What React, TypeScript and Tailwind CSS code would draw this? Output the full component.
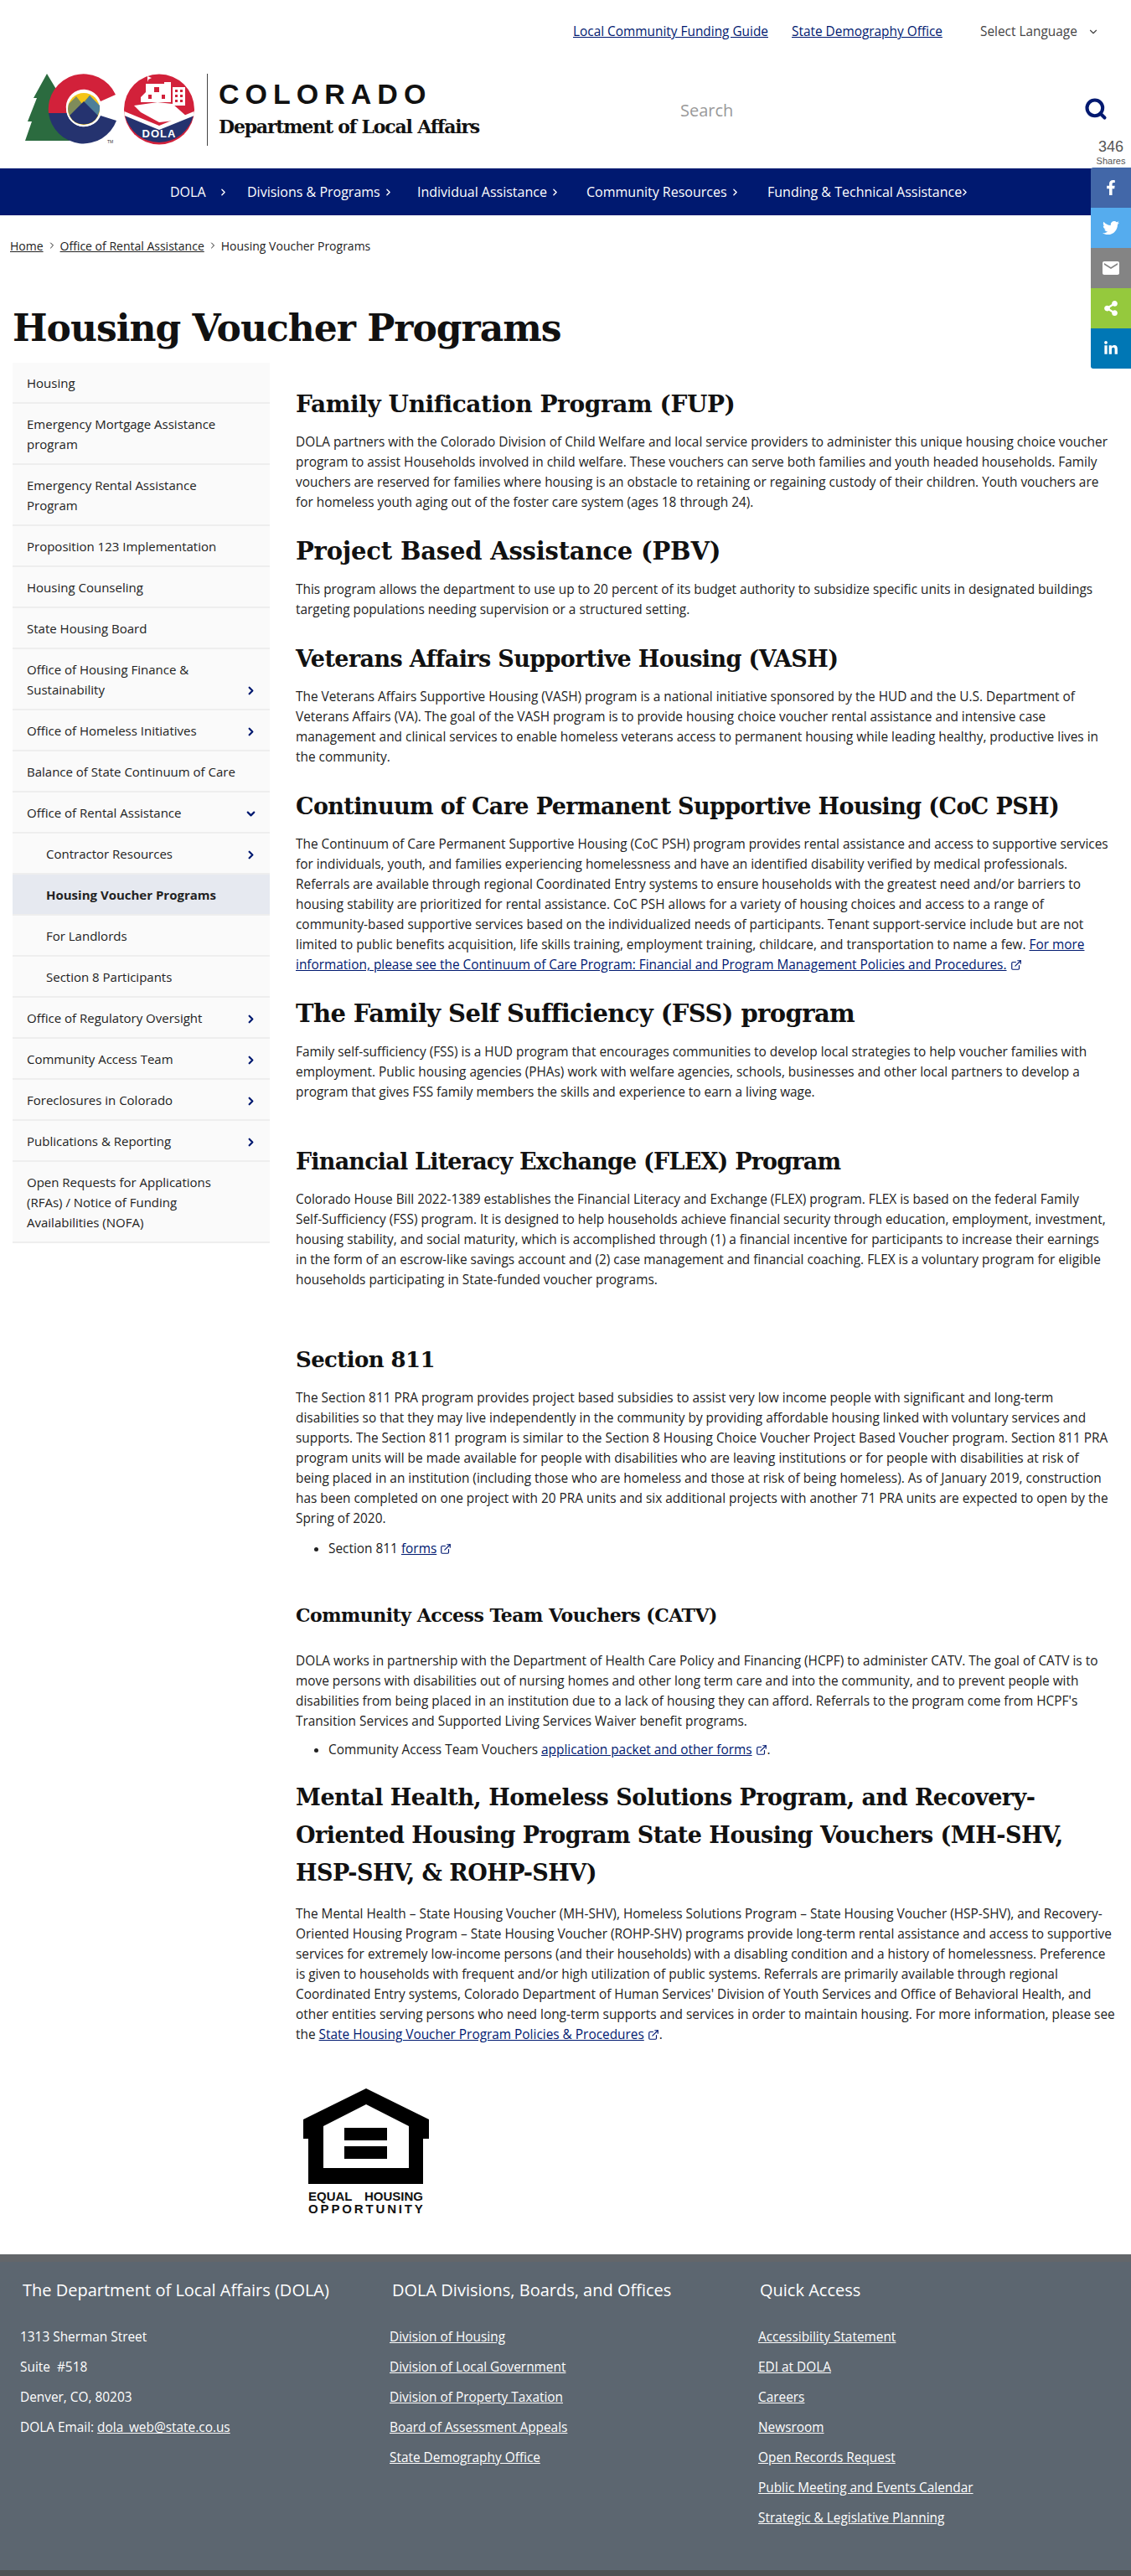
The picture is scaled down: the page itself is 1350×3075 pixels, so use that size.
import React from 'react';
import { ChevronRight, ChevronDown, ExternalLink, Search } from 'lucide-react';
import { FaFacebookF, FaTwitter, FaShareAlt, FaLinkedinIn } from 'react-icons/fa';
import { MdEmail } from 'react-icons/md';

const body = "[font-family:'Open_Sans',sans-serif]";

const ColoradoLogo = () => (
  <svg width="206" height="86" viewBox="0 0 206 86" className="shrink-0">
    <polygon points="28,0 12,29 16,29 5,57 10,57 2,80 55,80 40,20" fill="#2b6b3f" />
    <path d="M110 25 A42 42 0 0 0 30 47 L52 47 A21 21 0 0 1 92 33 Z" fill="#d2213a" />
    <path d="M30 47 A42 42 0 0 0 111 56 L92 50 A21 21 0 0 1 52 47 Z" fill="#25336f" />
    <circle cx="72" cy="42" r="21" fill="#fff" />
    <circle cx="72" cy="42" r="19" fill="#f5c518" />
    <path d="M54 36 L63 27 L70 36 L79 26 L91 40 A19 19 0 0 1 53 42 Z" fill="#7f8c5a" />
    <path d="M79 26 L91 38 A19 19 0 0 1 88 50 L72 36 Z" fill="#4d7f99" />
    <path d="M55 50 L72 33 L89 50 A19 19 0 0 1 55 50 Z" fill="#25336f" />
    <text x="100" y="83" fontSize="5" fill="#333" fontFamily="'Liberation Sans',sans-serif">TM</text>
    <circle cx="162" cy="42.5" r="42" fill="#d2213a" />
    <path d="M121 49 L162 66 L203 49 A42 42 0 0 1 121 49 Z" fill="#25336f" />
    <path d="M120.500 45 L162 62 L203.500 45 L204 50 L162 67 L120.500 50 Z" fill="#fff" />
    <path d="M146 12 h22 v-2 h8 v24 h-36 v-6 l6 -6 Z" fill="#fff" />
    <path d="M148 10 v-7 l5 2 -4 2" fill="#fff" />
    <path d="M178 16 h15 v22 h-15 Z" fill="#fff" />
    <path d="M181 19 h3 v3 h-3Z M187 19 h3 v3 h-3Z M181 25 h3 v3 h-3Z M187 25 h3 v3 h-3Z M181 31 h3 v3 h-3Z M187 31 h3 v3 h-3Z" fill="#d2213a" />
    <path d="M156 16 h6 v6 h-6Z M149 25 h4 v5 h-4Z M165 25 h4 v5 h-4Z" fill="#d2213a" />
    <path d="M132 38 L160 34 L178 36 L196 52 L180 56 L162 58 L140 46 Z" fill="#fff" />
    <text x="162" y="76" textAnchor="middle" fontSize="13" fontWeight="700" letterSpacing="1" fill="#fff" fontFamily="'Liberation Sans',sans-serif">DOLA</text>
  </svg>
);

const navItems = [
  { label: 'DOLA', cls: 'w-[92px]' },
  { label: 'Divisions & Programs', cls: 'w-[203px]' },
  { label: 'Individual Assistance', cls: 'w-[202px]' },
  { label: 'Community Resources', cls: 'w-[216px]' },
  { label: 'Funding & Technical Assistance', cls: '' },
];

type SideItem = { label: string; sub?: boolean; chevron?: 'right' | 'down'; active?: boolean };

const sideItems: SideItem[] = [
  { label: 'Housing' },
  { label: 'Emergency Mortgage Assistance program' },
  { label: 'Emergency Rental Assistance Program' },
  { label: 'Proposition 123 Implementation' },
  { label: 'Housing Counseling' },
  { label: 'State Housing Board' },
  { label: 'Office of Housing Finance & Sustainability', chevron: 'right' },
  { label: 'Office of Homeless Initiatives', chevron: 'right' },
  { label: 'Balance of State Continuum of Care' },
  { label: 'Office of Rental Assistance', chevron: 'down' },
  { label: 'Contractor Resources', sub: true, chevron: 'right' },
  { label: 'Housing Voucher Programs', sub: true, active: true },
  { label: 'For Landlords', sub: true },
  { label: 'Section 8 Participants', sub: true },
  { label: 'Office of Regulatory Oversight', chevron: 'right' },
  { label: 'Community Access Team', chevron: 'right' },
  { label: 'Foreclosures in Colorado', chevron: 'right' },
  { label: 'Publications & Reporting', chevron: 'right' },
  { label: 'Open Requests for Applications (RFAs) / Notice of Funding Availabilities (NOFA)' },
];

const Sidebar = () => (
  <aside className="w-[307px] shrink-0 ml-[15px] text-[15px] text-[#222]">
    {sideItems.map((item) => (
      <div
        key={item.label}
        className={`flex items-end justify-between border-b-2 border-[#eeeeee] pr-[15px] py-[11.5px] leading-6 ${item.active ? 'bg-[#e6e9f0] font-bold' : 'bg-[#fafafa]'} ${item.sub ? 'pl-[40px]' : 'pl-[17px]'}`}
      >
        <span className="max-w-[262px]">{item.label}</span>
        {item.chevron === 'right' && <ChevronRight size={15} strokeWidth={3.5} className="text-[#001970] mb-[3px] shrink-0" />}
        {item.chevron === 'down' && <ChevronDown size={15} strokeWidth={3.5} className="text-[#001970] mb-[3px] shrink-0" />}
      </div>
    ))}
  </aside>
);

const H2 = ({ children, className = '' }: { children: React.ReactNode; className?: string }) => (
  <h2 className={`font-['DejaVu_Serif',serif] font-bold leading-[45px] text-[#111] mb-[11px] ${className}`}>{children}</h2>
);

const Ext = ({ children }: { children: React.ReactNode }) => (
  <a className="text-[#001970] underline">
    {children}
    <ExternalLink size={14} strokeWidth={2} className="inline ml-[4px] mb-[2px] align-middle" />
  </a>
);

const P = ({ children }: { children: React.ReactNode }) => <p className="leading-6">{children}</p>;

const Li = ({ children }: { children: React.ReactNode }) => (
  <ul className="list-disc pl-[39px] leading-6">
    <li>{children}</li>
  </ul>
);

const Content = () => (
  <main className="ml-[31px] w-[982px] text-[15.4px] text-[#222] pt-[27px]">
    <H2 className="text-[28px] tracking-[-0.4px]">Family Unification Program (FUP)</H2>
    <P>DOLA partners with the Colorado Division of Child Welfare and local service providers to administer this unique housing choice voucher program to assist Households involved in child welfare. These vouchers can serve both families and youth headed households. Family vouchers are reserved for families where housing is an obstacle to retaining or regaining custody of their children. Youth vouchers are for homeless youth aging out of the foster care system (ages 18 through 24).</P>
    <H2 className="mt-6 text-[29px] tracking-[-0.2px]">Project Based Assistance (PBV)</H2>
    <P>This program allows the department to use up to 20 percent of its budget authority to subsidize specific units in designated buildings targeting populations needing supervision or a structured setting.</P>
    <H2 className="mt-6 text-[27px] tracking-[-0.6px]">Veterans Affairs Supportive Housing (VASH)</H2>
    <P>The Veterans Affairs Supportive Housing (VASH) program is a national initiative sponsored by the HUD and the U.S. Department of Veterans Affairs (VA). The goal of the VASH program is to provide housing choice voucher rental assistance and intensive case management and clinical services to enable homeless veterans access to permanent housing while leading healthy, productive lives in the community.</P>
    <H2 className="mt-6 text-[27px] tracking-[-0.6px]">Continuum of Care Permanent Supportive Housing (CoC PSH)</H2>
    <P>
      The Continuum of Care Permanent Supportive Housing (CoC PSH) program provides rental assistance and access to supportive services for individuals, youth, and families experiencing homelessness and have an identified disability verified by medical professionals. Referrals are available through regional Coordinated Entry systems to ensure households with the greatest need and/or barriers to housing stability are prioritized for rental assistance. CoC PSH allows for a variety of housing choices and access to a range of community-based supportive services based on the individualized needs of participants. Tenant support-service include but are not limited to public benefits acquisition, life skills training, employment training, childcare, and transportation to name a few.{' '}
      <Ext>For more information, please see the Continuum of Care Program: Financial and Program Management Policies and Procedures.</Ext>
    </P>
    <H2 className="mt-6 text-[29px] tracking-[-0.6px]">The Family Self Sufficiency (FSS) program</H2>
    <P>Family self-sufficiency (FSS) is a HUD program that encourages communities to develop local strategies to help voucher families with employment. Public housing agencies (PHAs) work with welfare agencies, schools, businesses and other local partners to develop a program that gives FSS family members the skills and experience to earn a living wage.</P>
    <H2 className="mt-12 text-[27px] tracking-[-0.8px]">Financial Literacy Exchange (FLEX) Program</H2>
    <P>Colorado House Bill 2022-1389 establishes the Financial Literacy and Exchange (FLEX) program. FLEX is based on the federal Family <span className="whitespace-nowrap">Self-Sufficiency</span> (FSS) program. It is designed to help households achieve financial security through education, employment, investment, housing stability, and social maturity, which is accomplished through (1) a financial incentive for participants to increase their earnings <span className="whitespace-nowrap">in the</span> form of an escrow-like savings account and (2) case management and financial coaching. FLEX is a voluntary program for eligible households participating in State-funded voucher programs.</P>
    <H2 className="mt-[61px] text-[26px] tracking-[-0.6px]">Section 811</H2>
    <P>The Section 811 PRA program provides project based subsidies to assist very low income people with significant and long-term disabilities so that they may live independently in the community by providing affordable housing linked with voluntary services and supports. The Section 811 program is similar to the Section 8 Housing Choice Voucher Project Based Voucher program. Section 811 PRA program units will be made available for people with disabilities who are leaving institutions or for people with disabilities at risk of <span className="whitespace-nowrap">being placed</span> in an institution (including those who are homeless and those at risk of being homeless). As of January 2019, construction has been completed on one project with 20 PRA units and six additional projects with another 71 PRA units are expected to open by the Spring of 2020.</P>
    <div className="mt-3">
      <Li>Section 811 <Ext>forms</Ext></Li>
    </div>
    <h3 className="font-['DejaVu_Serif',serif] font-bold text-[22px] leading-[45px] text-[#111] tracking-[-0.5px] mt-[45px] mb-5">Community Access Team Vouchers (CATV)</h3>
    <P>DOLA works in partnership with the Department of Health Care Policy and Financing (HCPF) to administer CATV. The goal of CATV is to move persons with disabilities out of nursing homes and other long term care and into the community, and to prevent people with disabilities from being placed in an institution due to a lack of housing they can afford. Referrals to the program come from HCPF's Transition Services and Supported Living Services Waiver benefit programs.</P>
    <div className="mt-[10px]">
      <Li>Community Access Team Vouchers <Ext>application packet and other forms</Ext>.</Li>
    </div>
    <H2 className="mt-[22px] mb-[15px] text-[27px] tracking-[-0.5px]">Mental Health, Homeless Solutions Program, and Recovery-Oriented Housing Program State Housing Vouchers (MH-SHV, HSP-SHV, &amp; ROHP-SHV)</H2>
    <P>
      The Mental Health – State Housing Voucher (MH-SHV), Homeless Solutions Program – State Housing Voucher (HSP-SHV), and Recovery-Oriented Housing Program – State Housing Voucher (ROHP-SHV) programs provide long-term rental assistance and access to supportive services for extremely low-income persons (and their households) with a disabling condition and a history of homelessness. Preference <span className="whitespace-nowrap">is given</span> to households with frequent and/or high utilization of public systems. Referrals are primarily available through regional <span className="whitespace-nowrap">Coordinated Entry</span> systems, Colorado Department of Human Services' Division of Youth Services and Office of Behavioral Health, and other entities serving persons who need long-term supports and services in order to maintain housing. For more information, please see the <Ext>State Housing Voucher Program Policies &amp; Procedures</Ext>.
    </P>
    <div className="mt-[52px] ml-[9px] w-[150px]">
      <svg width="150" height="114" viewBox="0 0 150 114" className="block">
        <path fillRule="evenodd" fill="#000" d="M75 0 L150 37 V60 H143 V114 H6 V60 H0 V37 Z M75 19 L24 45 V95 H126 V45 Z M49 47 H100 V62 H49 Z M49 69 H100 V84 H49 Z" />
      </svg>
      <div className="font-['Liberation_Sans',sans-serif] font-bold text-[#111] text-[15px] leading-[15px] mt-[7px] ml-[6px] w-[137px]">
        <div className="flex justify-between"><span>EQUAL</span><span>HOUSING</span></div>
        <div className="flex justify-between"><span>O</span><span>P</span><span>P</span><span>O</span><span>R</span><span>T</span><span>U</span><span>N</span><span>I</span><span>T</span><span>Y</span></div>
      </div>
    </div>
  </main>
);

const addressLines = ['1313 Sherman Street', 'Suite  #518', 'Denver, CO, 80203'];
const divisions = ['Division of Housing', 'Division of Local Government', 'Division of Property Taxation', 'Board of Assessment Appeals', 'State Demography Office'];
const quickLinks = ['Accessibility Statement', 'EDI at DOLA', 'Careers', 'Newsroom', 'Open Records Request', 'Public Meeting and Events Calendar', 'Strategic & Legislative Planning'];

const Footer = () => (
  <footer className="mt-[47px] h-[384px] bg-[#5c6670] border-t-[9px] border-[#63666a] border-b-[7px] border-b-[#4f5154] text-white text-[15.4px]">
    <div className="flex pt-[17px]">
      <div className="w-[465px] pl-[24px]">
        <h4 className="text-[20px] leading-[34px] pl-[3px] mb-[21px]">The Department of Local Affairs (DOLA)</h4>
        {addressLines.map((line) => (
          <div key={line} className="h-9 leading-9 whitespace-pre">{line}</div>
        ))}
        <div className="h-9 leading-9">DOLA Email: <a className="underline">dola_web@state.co.us</a></div>
      </div>
      <div className="w-[440px]">
        <h4 className="text-[20px] leading-[34px] pl-[3px] mb-[21px]">DOLA Divisions, Boards, and Offices</h4>
        {divisions.map((line) => (
          <div key={line} className="h-9 leading-9"><a className="underline">{line}</a></div>
        ))}
      </div>
      <div>
        <h4 className="text-[20px] leading-[34px] pl-[2px] mb-[21px]">Quick Access</h4>
        {quickLinks.map((line) => (
          <div key={line} className="h-9 leading-9"><a className="underline">{line}</a></div>
        ))}
      </div>
    </div>
  </footer>
);

const ShareBar = () => (
  <div className="absolute top-[165px] right-0 w-[48px] text-white">
    <div className="h-[35px] text-center font-['Liberation_Sans',sans-serif] text-[#555]">
      <div className="text-[18px] leading-[20px]">346</div>
      <div className="text-[11px] leading-[13px] mt-[1px]">Shares</div>
    </div>
    <div className="h-12 bg-[#4267a8] flex items-center justify-center rounded-tl-[3px]"><FaFacebookF size={18} /></div>
    <div className="h-12 bg-[#55acee] flex items-center justify-center"><FaTwitter size={20} /></div>
    <div className="h-12 bg-[#848484] flex items-center justify-center"><MdEmail size={24} /></div>
    <div className="h-12 bg-[#95c93d] flex items-center justify-center"><FaShareAlt size={18} /></div>
    <div className="h-12 bg-[#0077b5] flex items-center justify-center rounded-bl-[3px]"><FaLinkedinIn size={18} /></div>
  </div>
);

export default function App() {
  return (
    <div className={`relative w-[1350px] h-[3075px] overflow-hidden bg-white ${body}`}>
      <ShareBar />
      <div className="flex items-center h-[76px] text-[15.4px] pl-[684px] whitespace-nowrap">
        <div className="w-[261px] shrink-0"><a className="text-[#001970] underline">Local Community Funding Guide</a></div>
        <div className="w-[225px] shrink-0"><a className="text-[#001970] underline">State Demography Office</a></div>
        <span className="text-[#444]">Select Language</span>
        <ChevronDown size={14} className="ml-[12px] text-[#444] shrink-0" />
      </div>
      <div className="flex items-start h-[125px] pl-[28px] pt-[12px]">
        <ColoradoLogo />
        <div className="w-px h-[86px] bg-[#444] ml-[13px]" />
        <div className="ml-[13px] w-[312px] shrink-0">
          <div className="font-['Liberation_Sans',sans-serif] font-bold text-[34px] leading-[38px] tracking-[7px] text-[#111] mt-[5px]">COLORADO</div>
          <div className="font-['DejaVu_Serif',serif] font-bold text-[22px] leading-[30px] text-[#111] tracking-[-1.2px] mt-[5px] whitespace-nowrap">Department of Local Affairs</div>
        </div>
        <div className="ml-[239px] mt-[29px] text-[20px] text-[#999]">Search</div>
        <Search size={28} strokeWidth={3.5} className="absolute left-[1294px] top-[116px] text-[#001970]" />
      </div>
      <nav className="flex items-center h-[56px] bg-[#001970] pl-[203px] text-white text-[16px]">
        {navItems.map((item) => (
          <div key={item.label} className={`flex items-center shrink-0 ${item.cls}`}>
            <span>{item.label}</span>
            <ChevronRight size={13} strokeWidth={2.5} className={item.label === 'DOLA' ? 'ml-[14px]' : item.label.startsWith('Funding') ? 'ml-[-3px]' : 'ml-[3px]'} />
          </div>
        ))}
      </nav>
      <div className="flex items-center h-[24px] mt-[24px] pl-[12px] text-[14px] text-[#222]">
        <a className="underline">Home</a>
        <ChevronRight size={12} className="mx-[4px]" />
        <a className="underline">Office of Rental Assistance</a>
        <ChevronRight size={12} className="mx-[4px]" />
        <span>Housing Voucher Programs</span>
      </div>
      <h1 className="font-['DejaVu_Serif',serif] font-bold text-[44px] leading-[56px] text-[#111] tracking-[-1px] pl-[15px] mt-[59px] mb-[13px]">Housing Voucher Programs</h1>
      <div className="flex items-start">
        <Sidebar />
        <Content />
      </div>
      <Footer />
    </div>
  );
}
